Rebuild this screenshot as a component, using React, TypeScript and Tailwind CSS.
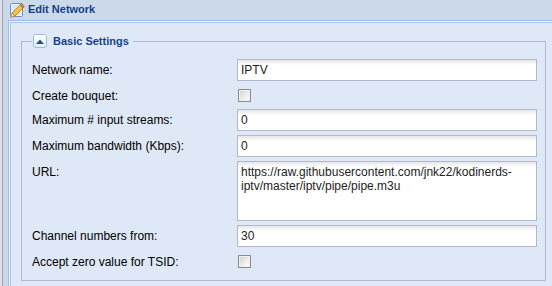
import React from "react";

const inputCls =
  "block h-[22px] w-[300px] border border-[#b5b8c8] bg-[linear-gradient(#e6e6e6,#fff_5px)] px-[3px] text-[12px] leading-[20px] text-[#222] outline-none";

const Checkbox = () => (
  <span className="mt-[4px] block h-[13px] w-[13px] border border-[#8c8c8c] bg-[linear-gradient(135deg,#cfcfcf,#f4f4f4_70%,#fff)] shadow-[inset_0_0_0_1px_#f0f0f0]" />
);

interface RowProps {
  label: string;
  children: React.ReactNode;
}

const Row: React.FC<RowProps> = ({ label, children }) => (
  <div className="flex">
    <label className="w-[205px] shrink-0 pt-[4px] text-[12px] leading-[14px] text-black">
      {label}
    </label>
    {children}
  </div>
);

const EditIcon = () => (
  <svg width="16" height="16" viewBox="0 0 16 16">
    <rect x="1.5" y="1.5" width="12" height="13" rx="1" fill="#eef4fc" stroke="#6a8fc6" />
    <rect x="3" y="3" width="9" height="10" fill="#dbe7f7" />
    <path d="M3 11 L11 3 L14 6 L6 14 Z" fill="#f3c53f" stroke="#b07a18" strokeWidth="0.8" />
    <path d="M3 11 L6 14 L1.5 15.5 Z" fill="#f3d9a6" stroke="#9a7030" strokeWidth="0.6" />
    <path d="M11 3 L12.5 1.5 L15.5 4.5 L14 6 Z" fill="#e07a6a" stroke="#a04a3a" strokeWidth="0.6" />
  </svg>
);

const App: React.FC = () => {
  return (
    <div className="flex h-[286px] w-[552px] overflow-hidden bg-[#dfe3e9] font-['Liberation_Sans',Arial,sans-serif]">
      <div className="ml-[2px] flex flex-1 flex-col border-l border-[#9ba6b5] bg-[#cbd9ea]">
        <div className="flex h-[20px] shrink-0 items-center gap-[3px] pb-[1px] pl-[6px]">
          <EditIcon />
          <span className="text-[11px] font-bold text-[#15428b]">Edit Network</span>
        </div>
        <div className="ml-[5px] flex-1 border-l border-t border-[#99bbe8]">
          <div className="h-full border-l border-t border-[#f3f7fc]">
            <div className="h-full border-l border-t border-[#a9c5ee] bg-[#dfe8f6] pl-[10px] pt-[11px]">
              <fieldset className="w-[525px] border border-[#b5b8c8] pb-[9px] pl-[10px] pr-[8px] pt-[11px]">
                <legend className="pl-[1px] pr-[4px]">
                  <div className="flex items-center gap-[6px]">
                    <span className="flex h-[14px] w-[14px] items-center justify-center rounded-[3px] border border-[#99bbe8] bg-[linear-gradient(#fff,#e4edf9)]">
                      <svg width="8" height="5" viewBox="0 0 8 5">
                        <path d="M0 5 L4 0.5 L8 5 Z" fill="#1c4f9c" />
                      </svg>
                    </span>
                    <span className="text-[11px] font-bold leading-[14px] text-[#15428b]">
                      Basic Settings
                    </span>
                  </div>
                </legend>
                <div className="flex flex-col gap-[4px]">
                  <Row label="Network name:">
                    <input className={inputCls} defaultValue="IPTV" readOnly />
                  </Row>
                  <div className="flex h-[20px]">
                    <label className="w-[205px] shrink-0 pt-[4px] text-[12px] leading-[14px] text-black">
                      Create bouquet:
                    </label>
                    <div className="pl-[1px]">
                      <Checkbox />
                    </div>
                  </div>
                  <Row label="Maximum # input streams:">
                    <input className={inputCls} defaultValue="0" readOnly />
                  </Row>
                  <Row label="Maximum bandwidth (Kbps):">
                    <input className={inputCls} defaultValue="0" readOnly />
                  </Row>
                  <Row label="URL:">
                    <textarea
                      className="block h-[60px] w-[300px] resize-none overflow-hidden border border-[#b5b8c8] bg-[linear-gradient(#e6e6e6,#fff_5px)] px-[3px] pt-[3px] text-[12px] leading-[14px] text-[#222] outline-none"
                      defaultValue="https://raw.githubusercontent.com/jnk22/kodinerds-iptv/master/iptv/pipe/pipe.m3u"
                      readOnly
                    />
                  </Row>
                  <Row label="Channel numbers from:">
                    <input className={inputCls} defaultValue="30" readOnly />
                  </Row>
                  <div className="flex h-[20px]">
                    <label className="w-[205px] shrink-0 pt-[4px] text-[12px] leading-[14px] text-black">
                      Accept zero value for TSID:
                    </label>
                    <div className="pl-[1px]">
                      <Checkbox />
                    </div>
                  </div>
                </div>
              </fieldset>
            </div>
          </div>
        </div>
      </div>
    </div>
  );
};

export default App;
